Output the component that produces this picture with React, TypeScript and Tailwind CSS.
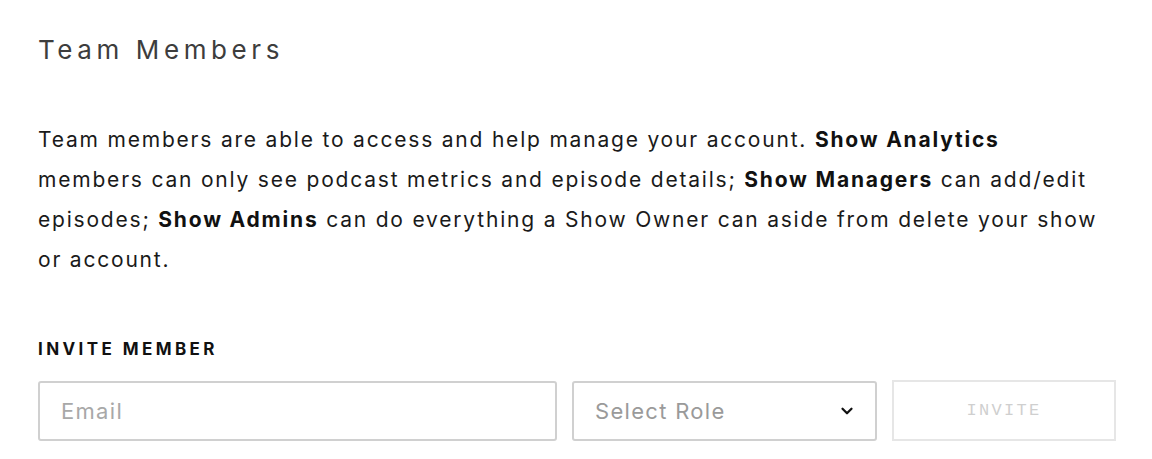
import { ChevronDown } from "lucide-react";

function App() {
  return (
    <div className="w-[1152px] h-[459px] bg-white font-['Inter',sans-serif] overflow-hidden">
      <div className="pl-[38px] pr-[36px] pt-[33px]">
        <h1 className="text-[26px] leading-[34px] text-[#3d3d3d] tracking-[4.6px]">Team Members</h1>

        <p className="mt-[53px] w-[1060px] text-[21px] leading-[40px] text-[#1a1a1a] tracking-[1.8px]">
          Team members are able to access and help manage your account.{" "}
          <b className="font-bold text-[#111]">Show Analytics</b> members can only see podcast metrics and episode
          details; <b className="font-bold text-[#111]">Show Managers</b> can add/edit episodes;{" "}
          <b className="font-bold text-[#111]">Show Admins</b> can do everything a Show Owner can aside from delete
          your show or account.
        </p>

        <div className="mt-[58px] text-[17px] leading-[22px] font-bold tracking-[3.4px] text-[#111]">INVITE MEMBER</div>

        <div className="mt-[21px] flex gap-[15px]">
          <div className="w-[519px] h-[60px] border-2 border-[#d0d0d0] rounded-[3px] flex items-center px-[21px]">
            <span className="text-[22px] tracking-[1.3px] text-[#a8a8a8]">Email</span>
          </div>
          <div className="w-[305px] h-[60px] border-2 border-[#d0d0d0] rounded-[3px] flex items-center justify-between pl-[21px] pr-[19px]">
            <span className="text-[22px] tracking-[1.3px] text-[#9a9a9a]">Select Role</span>
            <ChevronDown className="w-[18px] h-[18px] text-[#111]" strokeWidth={3} />
          </div>
          <div className="w-[224px] h-[61px] -mt-px border-2 border-[#e6e6e6] flex items-center justify-center">
            <span className="font-['Liberation_Mono',monospace] text-[17px] tracking-[2.3px] text-[#cfcfcf]">INVITE</span>
          </div>
        </div>
      </div>
    </div>
  );
}

export default App;
